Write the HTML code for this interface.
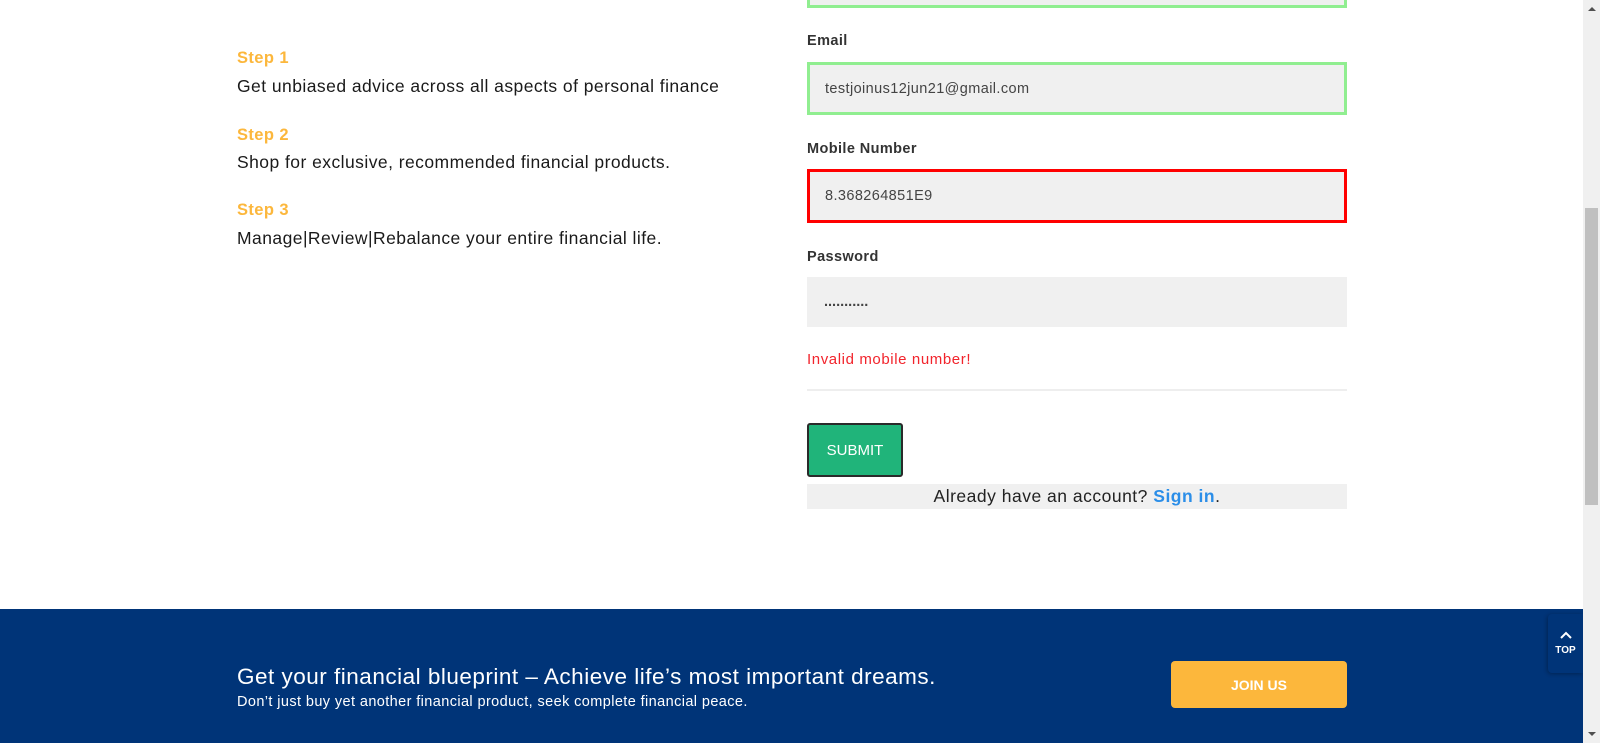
<!DOCTYPE html>
<html><head><meta charset="utf-8"><style>
*{margin:0;padding:0;box-sizing:border-box}
body{width:1600px;height:743px;overflow:hidden;background:#fff;font-family:"Liberation Sans",sans-serif;position:relative;color:#222}
.a{position:absolute}
.step{color:#fcb73c;font-weight:bold;font-size:16.5px;letter-spacing:0.4px}
.desc{font-size:17.5px;color:#1a1a1a;letter-spacing:0.45px}
.lbl{font-weight:bold;font-size:14.5px;color:#333;letter-spacing:0.4px}
.fld{background:#f0f0f0;left:807px;width:540px;font-size:14.5px;color:#444;padding-left:17px;display:flex;align-items:center;letter-spacing:0.4px}
</style></head><body>
<div class="a step" style="left:237px;top:49px">Step 1</div>
<div class="a desc" style="left:237px;top:76px">Get unbiased advice across all aspects of personal finance</div>
<div class="a step" style="left:237px;top:126px">Step 2</div>
<div class="a desc" style="left:237px;top:152px">Shop for exclusive, recommended financial products.</div>
<div class="a step" style="left:237px;top:201px">Step 3</div>
<div class="a desc" style="left:237px;top:228px">Manage|Review|Rebalance your entire financial life.</div>

<div class="a fld" style="top:-20px;height:28px;border:3px solid #90ee90"></div>
<div class="a lbl" style="left:807px;top:33px">Email</div>
<div class="a fld" style="top:62px;height:53px;border:3px solid #90ee90;padding-left:15px">testjoinus12jun21@gmail.com</div>
<div class="a lbl" style="left:807px;top:141px">Mobile Number</div>
<div class="a fld" style="top:169px;height:54px;border:3px solid #f00;padding-left:15px">8.368264851E9</div>
<div class="a lbl" style="left:807px;top:249px">Password</div>
<div class="a fld" style="top:277px;height:50px;font-weight:bold;letter-spacing:0px">...........</div>
<div class="a" style="left:807px;top:351px;font-size:15px;color:#f2242c;letter-spacing:0.6px">Invalid mobile number!</div>
<div class="a" style="left:807px;top:389px;width:540px;height:2px;background:#eee"></div>
<div class="a" style="left:807px;top:423px;width:96px;height:54px;background:#20b47a;border:2px solid #2a2a2a;border-radius:3px;color:#fff;font-size:15px;display:flex;align-items:center;justify-content:center">SUBMIT</div>
<div class="a" style="left:807px;top:484px;width:540px;height:25px;background:#f0f0f0;font-size:17.5px;text-align:center;line-height:25px;color:#222;letter-spacing:0.5px">Already have an account? <b style="color:#2b8ee8">Sign in</b>.</div>

<div class="a" style="left:0;top:609px;width:1583px;height:134px;background:#003478"></div>
<div class="a" style="left:237px;top:664px;font-size:22.5px;color:#fff;letter-spacing:0.5px">Get your financial blueprint – Achieve life’s most important dreams.</div>
<div class="a" style="left:237px;top:694px;font-size:14.5px;color:#fff;letter-spacing:0.4px">Don’t just buy yet another financial product, seek complete financial peace.</div>
<div class="a" style="left:1171px;top:661px;width:176px;height:47px;background:#fcb73c;border-radius:4px;color:#fff;font-weight:bold;font-size:14px;display:flex;align-items:center;justify-content:center">JOIN US</div>
<div class="a" style="left:1548px;top:614px;width:35px;height:59px;background:#003478;border-radius:4px 0 0 4px;box-shadow:-1px 1px 4px rgba(0,0,0,.3);color:#fff;font-weight:bold;font-size:10px;text-align:center">
<svg width="12" height="8" style="margin-top:17px" viewBox="0 0 12 8"><path d="M1 7L6 2L11 7" stroke="#fff" stroke-width="2" fill="none"/></svg>
<div style="margin-top:3px">TOP</div></div>

<div class="a" style="left:1583px;top:0;width:17px;height:743px;background:#f0f0f0"></div>
<div class="a" style="left:1585px;top:208px;width:13px;height:297px;background:#c0c0c0"></div>
<div class="a" style="left:1588px;top:7px;width:0;height:0;border-left:4px solid transparent;border-right:4px solid transparent;border-bottom:4px solid #505050"></div>
<div class="a" style="left:1588px;top:732px;width:0;height:0;border-left:4px solid transparent;border-right:4px solid transparent;border-top:4px solid #505050"></div>
</body></html>
